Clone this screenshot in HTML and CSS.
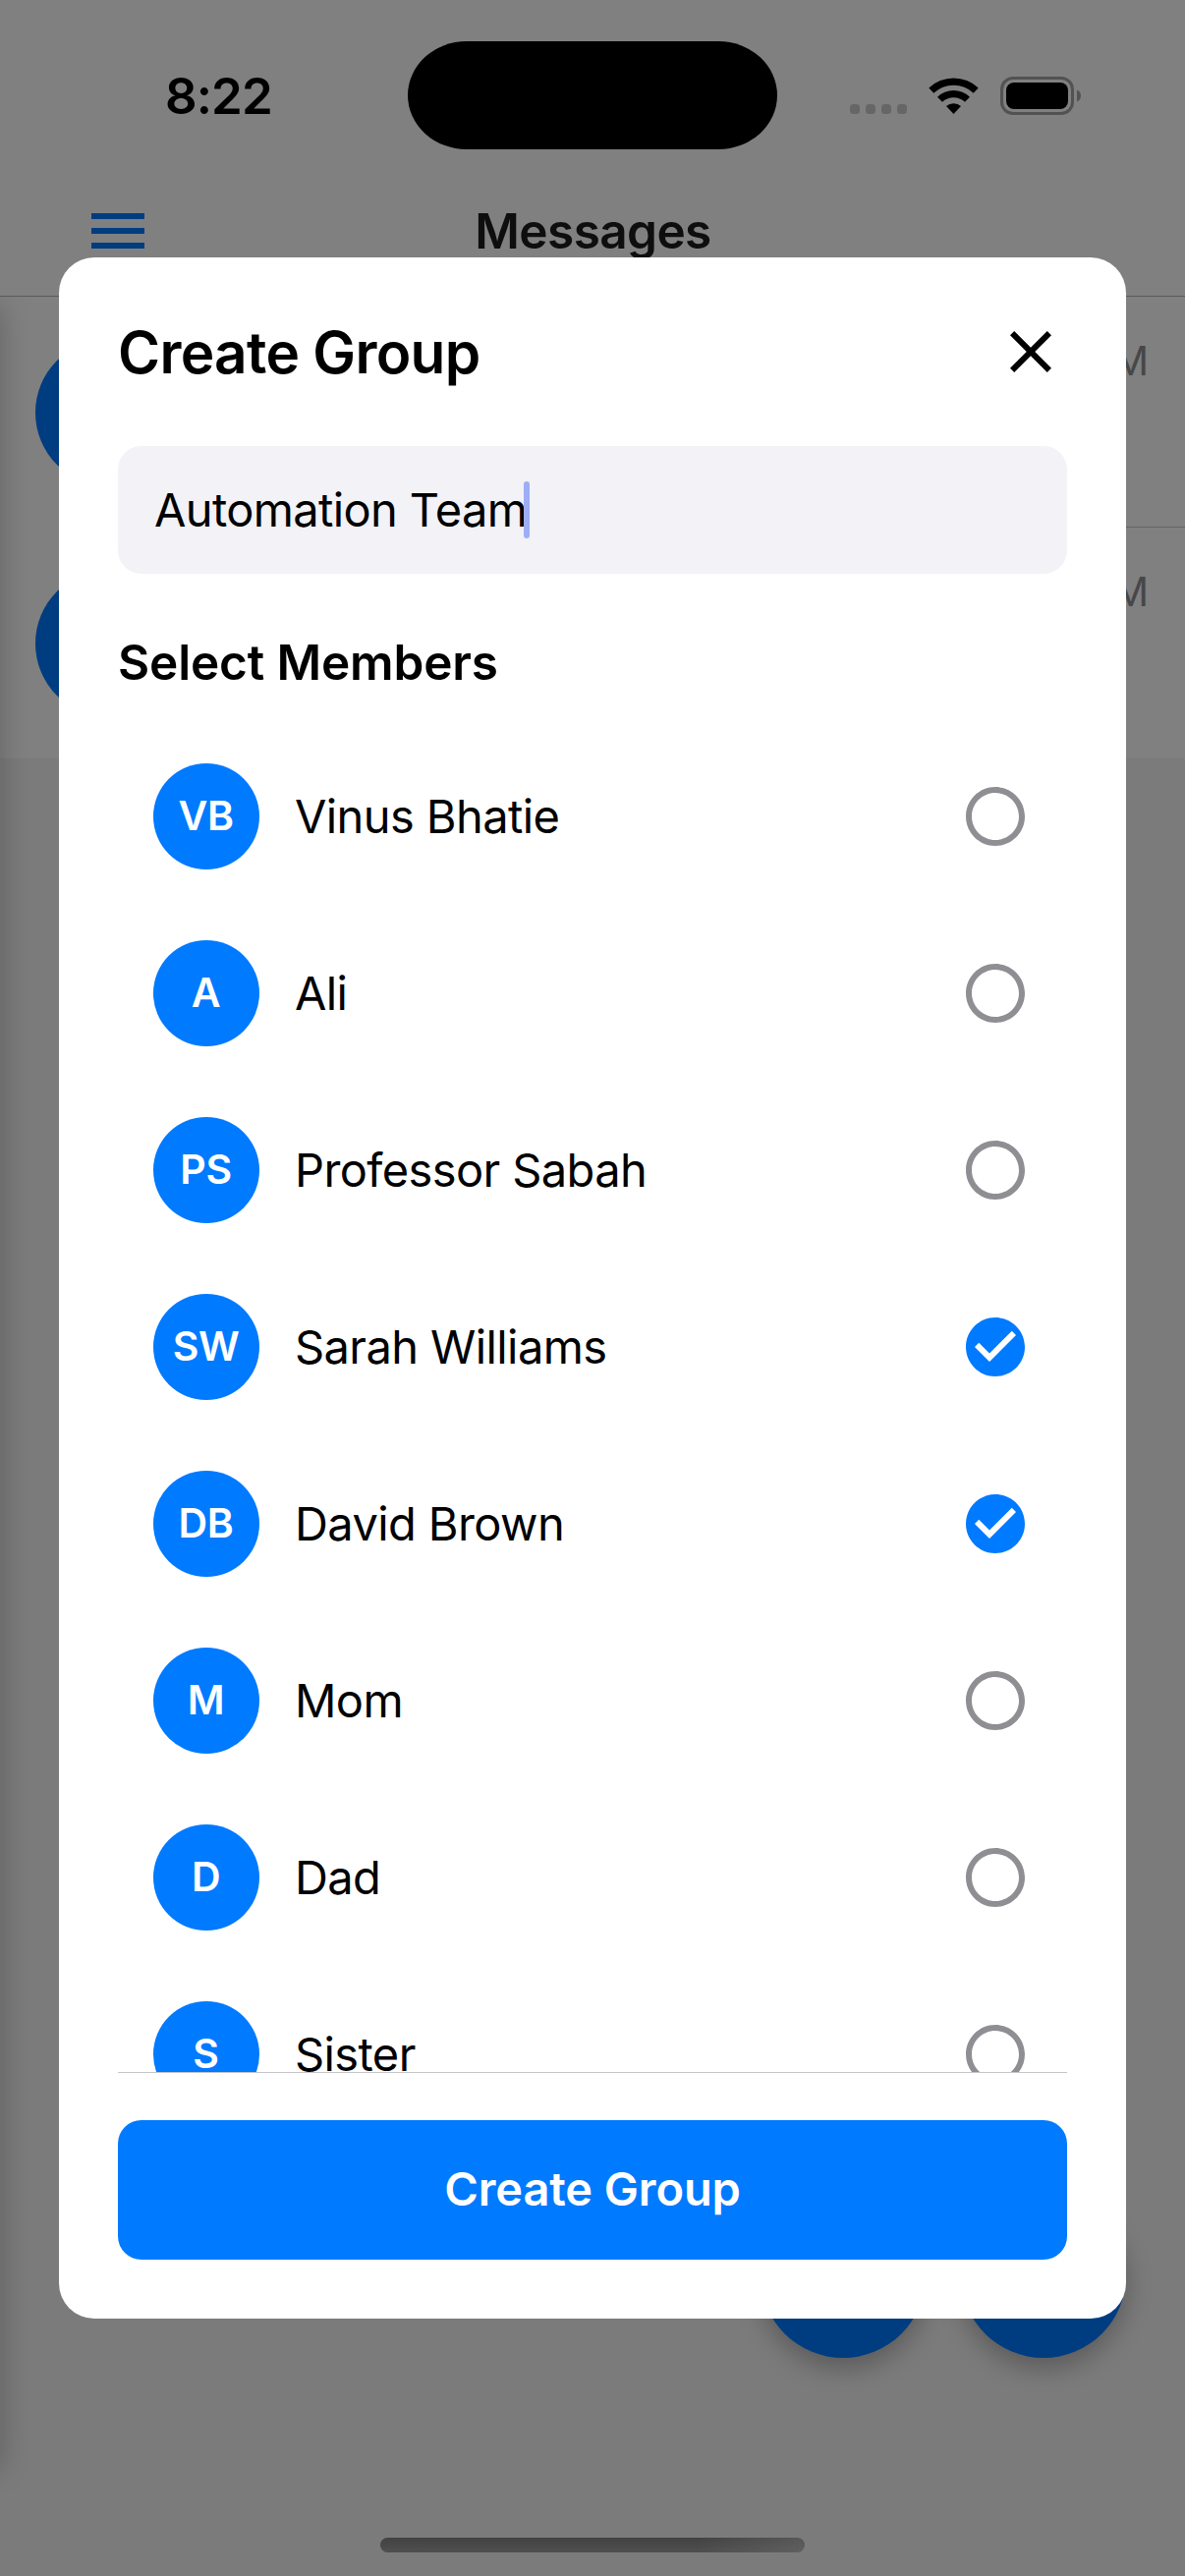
FILE: index.html
```html
<!DOCTYPE html>
<html lang="en">
<head>
<meta charset="utf-8">
<title>Messages</title>
<link rel="stylesheet" href="styles.css">
</head>
<body>
<svg class="sprite" aria-hidden="true">
  <symbol id="radio-off" viewBox="0 0 24 24"><path d="M12 2C6.48 2 2 6.48 2 12s4.48 10 10 10 10-4.48 10-10S17.52 2 12 2zm0 18c-4.42 0-8-3.58-8-8s3.58-8 8-8 8 3.58 8 8-3.58 8-8 8z"/></symbol>
  <symbol id="check-circle" viewBox="0 0 24 24"><path d="M12 2C6.48 2 2 6.48 2 12s4.48 10 10 10 10-4.48 10-10S17.52 2 12 2zm-2 15l-5-5 1.41-1.41L10 14.17l7.59-7.59L19 8l-9 9z"/></symbol>
</svg>
<div class="screen">
  <header class="top">
    <div class="status">
      <div class="time">8:22</div>
      <div class="island"></div>
      <div class="indicators">
        <div class="dots"><i></i><i></i><i></i><i></i></div>
        <svg class="wifi" viewBox="0 0 51 37"><path d="M.3 10.500A36.600 36.600 0 0 1 50.700 10.500L45.700 15.700A29.400 29.400 0 0 0 5.300 15.700z"/><path d="M9 19.700A23.900 23.900 0 0 1 42 19.700L37 24.700A16.800 16.800 0 0 0 14 24.700z"/><path d="M18 29A11.400 11.400 0 0 1 33 29L25.500 37z"/></svg>
        <svg class="battery" viewBox="0 0 83 39"><rect x="1.500" y="1.500" width="72" height="36" rx="11.500" fill="none" stroke="#525252" stroke-width="3"/><rect x="6" y="6" width="63" height="27" rx="8"/><path d="M78 13.500c2.500 1 4 3.300 4 6s-1.500 5-4 6z" fill="#525252"/></svg>
      </div>
    </div>
    <nav class="nav">
      <svg class="burger" viewBox="0 0 54 36"><path d="M0 0h54v6H0zM0 15h54v6H0zM0 30h54v6H0z"/></svg>
      <h1 class="nav-title">Messages</h1>
    </nav>
  </header>
  <main class="chats">
    <div class="chat"><div class="chat-avatar"></div><div class="chat-body"><time>PM</time></div></div>
    <div class="chat"><div class="chat-avatar"></div><div class="chat-body"><time>PM</time></div></div>
    <div class="drawer-edge"></div>
  </main>
  <div class="fabs"><div class="fab"></div><div class="fab"></div></div>
  <div class="home-bar"></div>
  <section class="modal">
    <div class="modal-head">
      <h2>Create Group</h2>
      <svg class="close" viewBox="0 0 24 24"><path d="M19 6.410L17.590 5 12 10.590 6.410 5 5 6.410 10.590 12 5 17.590 6.410 19 12 13.410 17.590 19 19 17.590 13.410 12z"/></svg>
    </div>
    <div class="field"><span class="field-text">Automation Team</span><span class="caret"></span></div>
    <h3>Select Members</h3>
    <div class="members">
      <div class="member"><div class="avatar">VB</div><div class="name">Vinus Bhatie</div><svg class="mark"><use href="#radio-off"/></svg></div>
      <div class="member"><div class="avatar">A</div><div class="name">Ali</div><svg class="mark"><use href="#radio-off"/></svg></div>
      <div class="member"><div class="avatar">PS</div><div class="name">Professor Sabah</div><svg class="mark"><use href="#radio-off"/></svg></div>
      <div class="member"><div class="avatar">SW</div><div class="name">Sarah Williams</div><svg class="mark on"><use href="#check-circle"/></svg></div>
      <div class="member"><div class="avatar">DB</div><div class="name">David Brown</div><svg class="mark on"><use href="#check-circle"/></svg></div>
      <div class="member"><div class="avatar">M</div><div class="name">Mom</div><svg class="mark"><use href="#radio-off"/></svg></div>
      <div class="member"><div class="avatar">D</div><div class="name">Dad</div><svg class="mark"><use href="#radio-off"/></svg></div>
      <div class="member"><div class="avatar">S</div><div class="name">Sister</div><svg class="mark"><use href="#radio-off"/></svg></div>
    </div>
    <div class="modal-foot"><div class="create">Create Group</div></div>
  </section>
</div>
</body>
</html>
```
FILE: styles.css
```css
* { box-sizing: border-box; margin: 0; padding: 0; }
body { background: #7b7b7b; font-family: Inter, "Liberation Sans", sans-serif; color: #000; }
.sprite { position: absolute; width: 0; height: 0; }
.screen { position: relative; width: 1206px; height: 2622px; overflow: hidden; background: #7b7b7b; }

.top { height: 302px; background: #808080; border-bottom: 1px solid #5b5b5b; }
.status { display: grid; grid-template-columns: 415px 376px 415px; height: 186px; padding-top: 42px; }
.time { padding-left: 168px; font-size: 51px; line-height: 62px; padding-top: 25px; font-weight: 600; letter-spacing: -.9px; }
.island { height: 110px; background: #000; border-radius: 60px / 55px; }
.indicators { display: flex; align-items: flex-start; padding: 36px 0 0 74px; }
.dots { display: flex; gap: 6px; padding-top: 28px; margin-right: 22px; }
.dots i { width: 10px; height: 10px; border-radius: 3.500px; background: #666; }
.wifi { width: 51px; height: 37px; margin: 1px 22px 0 0; }
.battery { width: 83px; height: 39px; }
.nav { display: flex; align-items: center; height: 98px; padding-left: 93px; }
.burger { width: 54px; height: 36px; fill: #003d80; }
.nav-title { flex: 1; margin-right: 146px; text-align: center; font-size: 49.500px; line-height: 60px; font-weight: 600; color: #0e0e0f; letter-spacing: -.6px; }

.chats { position: relative; }
.chat { display: flex; align-items: center; gap: 36px; height: 235px; padding-left: 36px; background: #808080; }
.chat-avatar { width: 150px; height: 150px; border-radius: 50%; background: #003d80; }
.chat-body { flex: 1; align-self: stretch; padding: 41px 37px 0 0; text-align: right; border-bottom: 1px solid #636364; }
.chat:nth-child(2) .chat-body { border-bottom: 0; }
.chat-body time { font-size: 40.500px; line-height: 50px; color: #474749; }
/* soft shadow cast by the closed drawer just off the left edge */
.drawer-edge { position: absolute; left: 0; top: 0; width: 40px; height: 2260px; overflow: hidden; }
.drawer-edge::before { content: ""; position: absolute; left: -60px; top: 10px; width: 60px; height: 2200px; box-shadow: 0 0 30px rgba(0,0,0,.24); }

.fabs { position: absolute; right: 60px; top: 2232px; display: flex; gap: 36px; }
.fab { width: 168px; height: 168px; border-radius: 50%; background: #003d80; box-shadow: 0 10px 26px rgba(0,0,0,.27); }
.home-bar { position: absolute; left: 387px; top: 2583px; width: 432px; height: 15px; border-radius: 8px; background: linear-gradient(90deg, transparent 75%, rgba(120,120,120,.4)), linear-gradient(#424242, #4f4f4f); }

.modal { position: absolute; left: 60px; top: 262px; width: 1086px; height: 2098px; padding: 60px; border-radius: 36px; background: #fff; display: flex; flex-direction: column; }
.modal-head { display: flex; justify-content: space-between; align-items: center; height: 72px; margin-bottom: 60px; }
.modal-head h2 { font-size: 58.500px; line-height: 72px; font-weight: 600; letter-spacing: -.7px; padding-top: 1px; }
.close { width: 72px; height: 72px; margin-right: 1px; }
.field { display: flex; align-items: center; height: 130px; padding: 0 36px; border-radius: 24px; background: #f2f2f7; margin-bottom: 60px; flex: none; }
.field-text { font-size: 47px; line-height: 58px; letter-spacing: -.65px; padding-left: 1px; }
.caret { width: 6px; height: 58px; margin-left: -3px; border-radius: 3px; background: #9eaef6; }
h3 { font-size: 49.500px; line-height: 61px; font-weight: 600; letter-spacing: -.150px; margin-bottom: 36px; }
.members { flex: 1; min-height: 0; overflow: hidden; }
.member { display: flex; align-items: center; height: 180px; padding: 0 37px 0 36px; }
.avatar { width: 108px; height: 108px; border-radius: 50%; background: #007aff; color: #fff; font-size: 41px; font-weight: 600; line-height: 106px; text-align: center; letter-spacing: -.4px; padding-right: 1px; }
.name { flex: 1; margin-left: 36px; font-size: 47px; line-height: 58px; letter-spacing: -.6px; }
.mark { width: 72px; height: 72px; fill: #8e8e93; }
.mark.on { fill: #007aff; }
.modal-foot { border-top: 1px solid #c6c6c8; padding-top: 48px; }
.create { height: 142px; border-radius: 24px; background: #007aff; color: #fff; font-size: 47px; line-height: 140px; font-weight: 600; text-align: center; letter-spacing: -.1px; }
```
